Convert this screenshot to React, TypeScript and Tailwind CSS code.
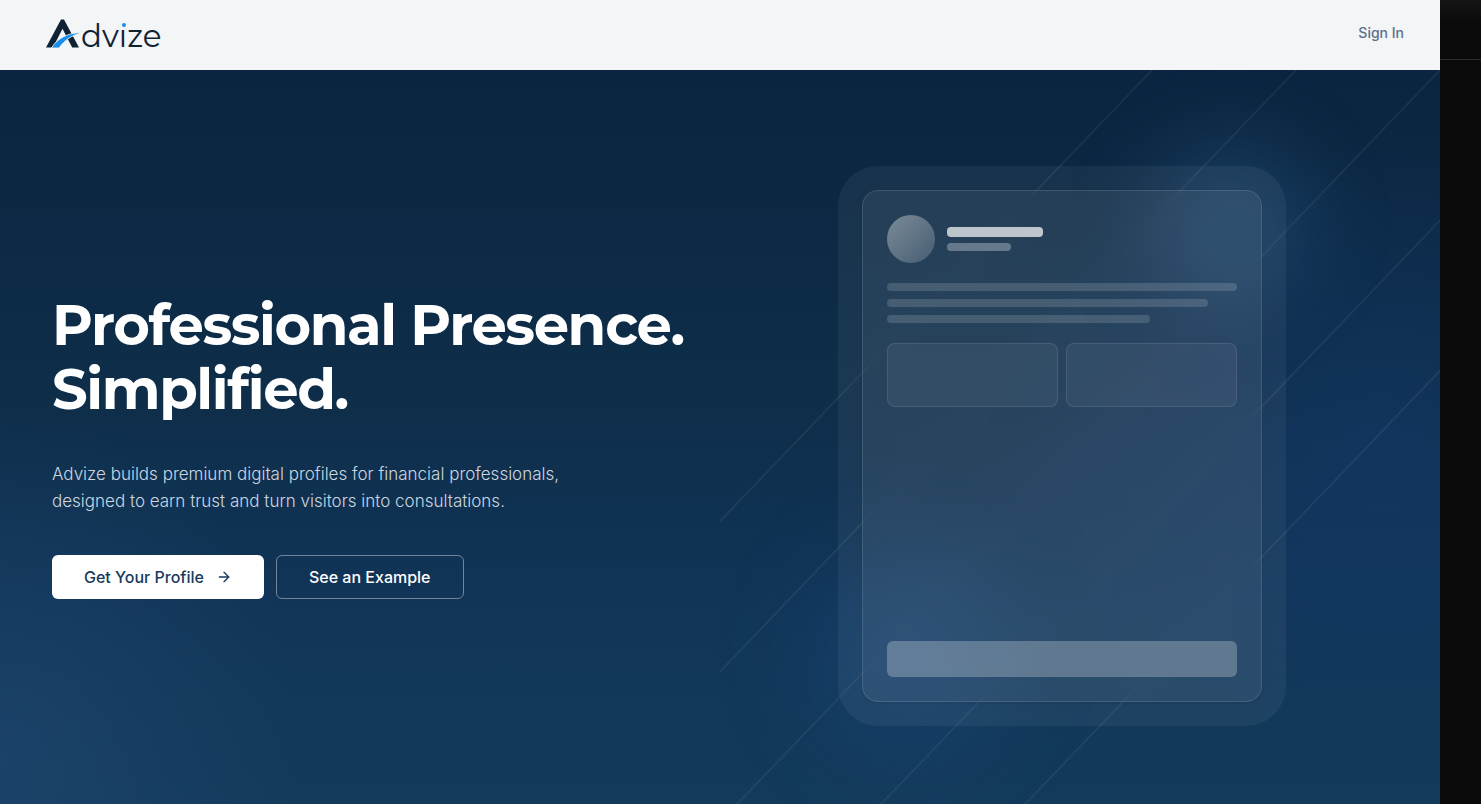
import { ArrowRight } from 'lucide-react'

const lines = [60, 80, 100, 120, 140]

const Logo = () => {
  return (
    <a href="#" aria-label="Advize">
      <svg width="124" height="44" viewBox="0 -4 124 44">
        <path d="M2 32.5 L17 4.5 H20 L35 32.5 H28.2 L18.5 13.8 L9 32.5 Z" fill="#0f2233" />
        <path
          d="M7.5 33 C12 25 22 17.6 38 17.4 C28 20.4 21 24.5 15 33 Z"
          fill="#1a8cea"
          stroke="#f3f5f7"
          strokeWidth="0.8"
        />
        <text
          x="37"
          y="32"
          fill="#0f2233"
          fontFamily="Montserrat, Inter, sans-serif"
          fontSize="31"
          fontWeight="400"
        >
          dvize
        </text>
        <circle cx="80" cy="10" r="3" fill="#f3f5f7" />
        <circle cx="80" cy="10" r="2" fill="#1a8cea" />
      </svg>
    </a>
  )
}

const Header = () => {
  return (
    <header className="flex h-[70px] shrink-0 items-center justify-between bg-[#f3f5f7] pb-1 pl-11 pr-9">
      <Logo />
      <a href="#" className="text-sm font-medium text-[#5a6f8c]">
        Sign In
      </a>
    </header>
  )
}

const HeroBackground = () => {
  return (
    <div className="absolute inset-0">
      <div className="absolute inset-0 bg-[linear-gradient(180deg,#0a2540_0%,#0e2e4a_45%,#113558_70%,#133b5c_100%)]" />
      <div className="absolute inset-0 bg-[radial-gradient(ellipse_300px_360px_at_0%_92%,rgba(40,80,125,0.4),transparent)]" />
      <div className="absolute inset-0 bg-[radial-gradient(ellipse_400px_300px_at_96%_50%,rgba(22,60,115,0.45),transparent)]" />
      <svg
        className="absolute right-0 top-0 h-full w-1/2"
        viewBox="0 0 100 100"
        preserveAspectRatio="none"
      >
        {lines.map((line) => (
          <line
            key={line}
            x1={line}
            y1="0"
            x2={line - 100}
            y2="100"
            stroke="#ffffff"
            strokeOpacity="0.06"
            strokeWidth="2"
            vectorEffect="non-scaling-stroke"
          />
        ))}
      </svg>
    </div>
  )
}

const HeroText = () => {
  return (
    <div className="flex flex-col gap-10">
      <h1 className="whitespace-nowrap font-[Montserrat,Inter,sans-serif] text-[56px] font-bold leading-16 tracking-tight text-white">
        Professional Presence.
        <br />
        Simplified.
      </h1>
      <p className="text-[17px] font-light leading-[27px] text-[#ccd6e0]">
        Advize builds premium digital profiles for financial professionals,
        <br />
        designed to earn trust and turn visitors into consultations.
      </p>
      <div className="flex gap-3">
        <button className="flex h-11 items-center gap-3 rounded-md bg-white px-8 font-medium text-[#173a5c]">
          Get Your Profile
          <ArrowRight size={16} />
        </button>
        <button className="h-11 rounded-md border border-white/40 px-8 font-medium text-white">
          See an Example
        </button>
      </div>
    </div>
  )
}

const ProfileCard = () => {
  return (
    <div className="relative">
      <div className="absolute -right-12 -top-12 size-40 rounded-full bg-[#4078b0]/25 blur-[40px]" />
      <div className="absolute -bottom-12 -left-12 size-48 rounded-full bg-[#2860a8]/20 blur-[48px]" />
      <div className="absolute -inset-6 rounded-[40px] bg-white/5" />
      <div className="relative flex h-[512px] w-[400px] flex-col rounded-2xl border border-white/12 bg-white/6 p-6 shadow-sm backdrop-blur-md">
        <div className="flex items-center gap-3">
          <div className="size-12 rounded-full bg-linear-to-br from-white/40 to-white/15" />
          <div className="flex flex-col gap-1.5">
            <div className="h-2.5 w-24 rounded-sm bg-white/70" />
            <div className="h-2 w-16 rounded-sm bg-white/30" />
          </div>
        </div>
        <div className="mt-5 flex flex-col gap-2">
          <div className="h-2 rounded-sm bg-white/15" />
          <div className="h-2 w-11/12 rounded-sm bg-white/15" />
          <div className="h-2 w-3/4 rounded-sm bg-white/15" />
        </div>
        <div className="mt-5 grid grid-cols-2 gap-2">
          <div className="h-16 rounded-lg border border-white/10 bg-white/5" />
          <div className="h-16 rounded-lg border border-white/10 bg-white/5" />
        </div>
        <div className="mt-auto h-9 rounded-md bg-white/25" />
      </div>
    </div>
  )
}

const App = () => {
  return (
    <div className="flex h-screen overflow-hidden font-[Inter,sans-serif]">
      <div className="flex min-w-0 flex-1 flex-col">
        <Header />
        <main className="relative shrink-0 overflow-hidden">
          <HeroBackground />
          <section className="relative grid min-h-[752px] grid-cols-2 items-center gap-8 px-[52px]">
            <HeroText />
            <div className="flex justify-center">
              <ProfileCard />
            </div>
          </section>
        </main>
      </div>
      <aside className="w-[41px] shrink-0 bg-[#0a0a0a]">
        <div className="h-15 border-b border-[#2c2c2c] bg-linear-to-b from-[#161616] to-[#0a0a0a] to-40%" />
      </aside>
    </div>
  )
}

export default App
